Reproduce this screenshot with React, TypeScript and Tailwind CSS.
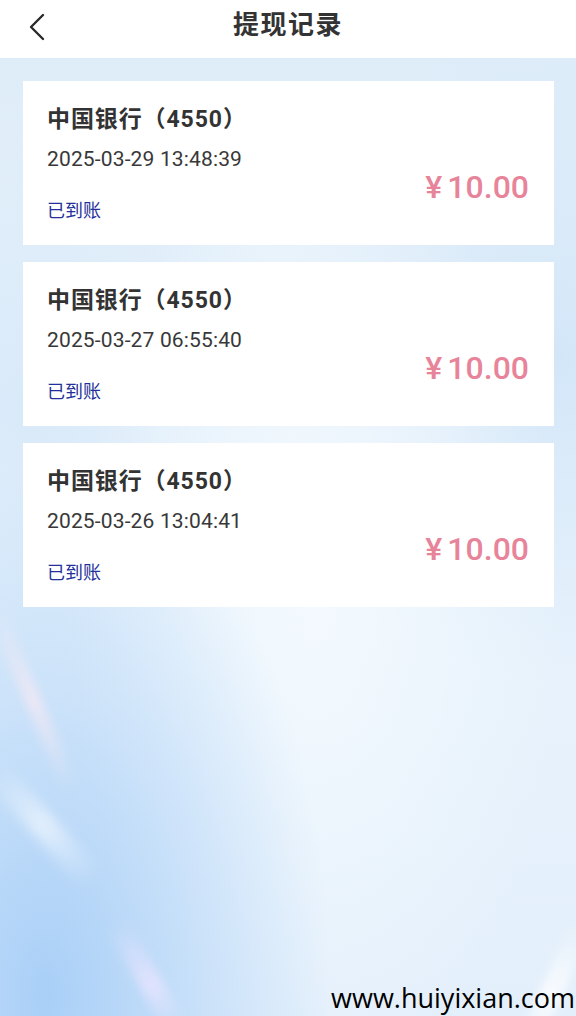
import React from "react";

const records = [
  { bank: "中国银行（4550）", time: "2025-03-29 13:48:39", status: "已到账", amount: "10.00" },
  { bank: "中国银行（4550）", time: "2025-03-27 06:55:40", status: "已到账", amount: "10.00" },
  { bank: "中国银行（4550）", time: "2025-03-26 13:04:41", status: "已到账", amount: "10.00" },
];

export default function App() {
  return (
    <div
      className="relative w-[576px] h-[1016px] overflow-hidden flex flex-col bg-[#e6f1fb]"
      style={{ fontFamily: 'Roboto, "Noto Sans CJK SC", sans-serif' }}
    >
      <div className="pointer-events-none absolute inset-0 bg-[radial-gradient(ellipse_at_8%_98%,#a9cff7_0%,rgba(169,207,247,0)_38%),radial-gradient(ellipse_at_55%_60%,#f3f9fe_0%,rgba(243,249,254,0)_55%),radial-gradient(ellipse_at_97%_35%,#d3e6f8_0%,rgba(211,230,248,0)_35%),radial-gradient(ellipse_at_5%_40%,#d8e9f9_0%,rgba(216,233,249,0)_35%),linear-gradient(180deg,#dcebf8_0%,#eaf4fc_40%,#e3effb_100%)]" />
      <div className="pointer-events-none absolute left-[25px] top-[600px] w-[16px] h-[200px] rotate-[-23deg] bg-[linear-gradient(180deg,rgba(255,235,242,0)_0%,rgba(255,235,242,0.6)_50%,rgba(255,235,242,0)_100%)] blur-[5px]" />
      <div className="pointer-events-none absolute left-[30px] top-[750px] w-[26px] h-[150px] rotate-[-42deg] bg-[linear-gradient(180deg,rgba(255,255,255,0)_0%,rgba(255,255,255,0.55)_50%,rgba(255,255,255,0)_100%)] blur-[6px]" />
      <div className="pointer-events-none absolute left-[135px] top-[915px] w-[22px] h-[120px] rotate-[-30deg] bg-[linear-gradient(180deg,rgba(238,230,255,0)_0%,rgba(238,230,255,0.7)_60%,rgba(238,230,255,0)_100%)] blur-[5px]" />
      <div className="pointer-events-none absolute right-[10px] top-[920px] w-[22px] h-[130px] rotate-[25deg] bg-[linear-gradient(180deg,rgba(255,255,255,0)_0%,rgba(255,255,255,0.8)_60%,rgba(255,255,255,0)_100%)] blur-[4px]" />

      <header className="relative z-10 h-[58px] bg-white flex items-center justify-center shrink-0">
        <button className="absolute left-[24px] top-[10px] w-[26px] h-[34px] flex items-center justify-center">
          <svg width="20" height="30" viewBox="0 0 20 30" fill="none">
            <path d="M16 3 L4 15 L16 27" stroke="#2a2a2a" strokeWidth="2.4" strokeLinecap="round" strokeLinejoin="round" />
          </svg>
        </button>
        <h1 className="text-[26px] font-bold text-[#333333] tracking-[1.5px] leading-[32px] -mt-[8px]">提现记录</h1>
      </header>

      <main className="relative z-10 flex flex-col gap-[17px] pt-[23px] pl-[23px] pr-[22px]">
        {records.map((r, i) => (
          <div key={i} className="h-[164px] bg-white flex justify-between pl-[24px] pr-[25px]">
            <div className="flex flex-col">
              <div className="mt-[24px] text-[23px] leading-[30px] font-bold text-[#333333] tracking-[0.9px]">{r.bank}</div>
              <div className="mt-[12px] text-[21px] leading-[24px] text-[#383838] tracking-[0.15px]">{r.time}</div>
              <div className="mt-[28px] text-[18px] leading-[24px] text-[#23309a]">{r.status}</div>
            </div>
            <div className="mt-[88px] text-[32px] leading-[36px] text-[#e8849a] font-medium flex">
              <span className="mr-[5px]">¥</span>
              <span>{r.amount}</span>
            </div>
          </div>
        ))}
      </main>

      <div
        className="absolute right-[1px] bottom-[2px] z-10 text-[27px] leading-[32px] text-black"
        style={{ fontFamily: '"Open Sans", sans-serif' }}
      >
        www.huiyixian.com
      </div>
    </div>
  );
}
